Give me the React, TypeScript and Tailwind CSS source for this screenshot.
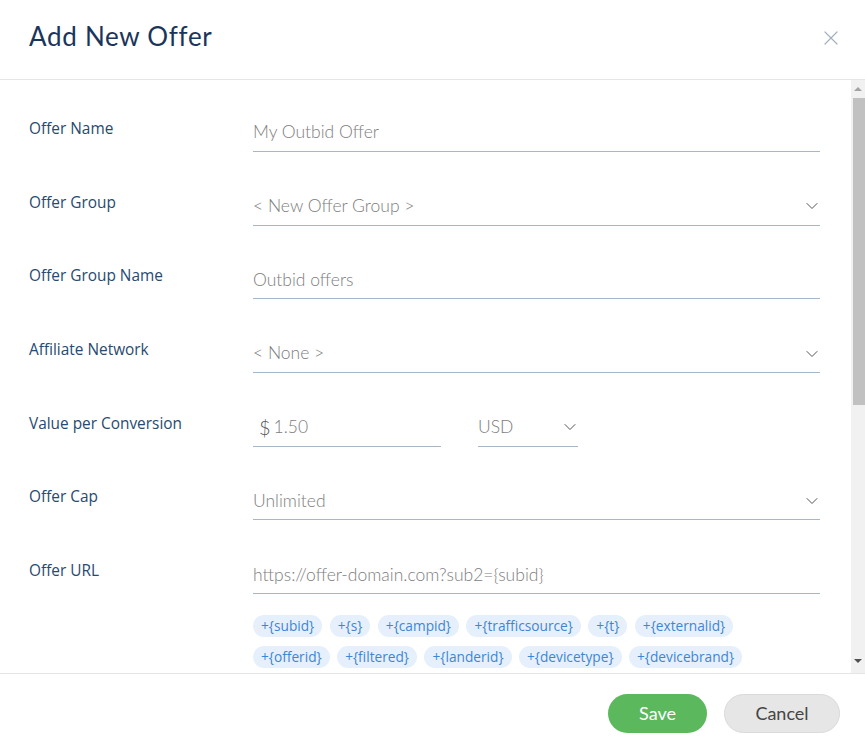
import { X, ChevronDown } from "lucide-react";

const tokens = [
  ["{subid}", "{s}", "{campid}", "{trafficsource}", "{t}", "{externalid}"],
  ["{offerid}", "{filtered}", "{landerid}", "{devicetype}", "{devicebrand}"],
];

function Field({ label, children }: { label: string; children: React.ReactNode }) {
  return (
    <div className="flex items-start">
      <div className="w-[224px] shrink-0 pt-[3px] font-['Open_Sans',sans-serif] text-[15.4px] text-[#284a70]">
        {label}
      </div>
      <div className="flex-1">{children}</div>
    </div>
  );
}

function TextInput({ value, prefix }: { value: string; prefix?: string }) {
  return (
    <div className="flex h-[38px] items-center border-b border-[#a9b6c6] text-[17.5px] font-light text-[#7d7d7d]">
      {prefix && <span className="mr-[3px] ml-[6px] text-[20px] text-[#555]">{prefix}</span>}
      <span>{value}</span>
    </div>
  );
}

function Select({ value, className = "" }: { value: string; className?: string }) {
  return (
    <div
      className={`flex h-[38px] items-center justify-between border-b border-[#a9b6c6] text-[17.5px] font-light text-[#7d7d7d] ${className}`}
    >
      <span>{value}</span>
      <ChevronDown className="mr-[-2px] h-[20px] w-[20px] text-[#555]" strokeWidth={1.2} />
    </div>
  );
}

export default function App() {
  return (
    <div className="flex h-[747px] w-[865px] flex-col bg-white font-['Lato',sans-serif]">
      <header className="flex h-[80px] shrink-0 items-center justify-between border-b border-[#e5e5e5] pl-[29px] pr-[22px]">
        <h1 className="pb-[6px] text-[26px] font-normal tracking-[0.7px] text-[#1b355a]">Add New Offer</h1>
        <button type="button" className="pb-[3px] text-[#a3b0c0]">
          <X className="h-[24px] w-[24px]" strokeWidth={1.2} />
        </button>
      </header>

      <div className="flex min-h-0 flex-1">
        <div className="flex-1 overflow-hidden">
          <div className="flex flex-col gap-[35.7px] pt-[34px] pr-[31px] pl-[29px]">
            <Field label="Offer Name">
              <TextInput value="My Outbid Offer" />
            </Field>
            <Field label="Offer Group">
              <Select value="< New Offer Group >" />
            </Field>
            <Field label="Offer Group Name">
              <TextInput value="Outbid offers" />
            </Field>
            <Field label="Affiliate Network">
              <Select value="< None >" />
            </Field>
            <Field label="Value per Conversion">
              <div className="flex gap-[37px]">
                <div className="w-[188px]">
                  <TextInput prefix="$" value="1.50" />
                </div>
                <Select value="USD" className="w-[100px]" />
              </div>
            </Field>
            <Field label="Offer Cap">
              <Select value="Unlimited" />
            </Field>
            <Field label="Offer URL">
              <TextInput value="https://offer-domain.com?sub2={subid}" />
              <div className="mt-[21px] flex flex-col gap-[9px]">
                {tokens.map((row, i) => (
                  <div key={i} className="flex gap-[7.5px]">
                    {row.map((t) => (
                      <span
                        key={t}
                        className="flex h-[22px] items-center rounded-full bg-[#e5f0fc] px-[8px] font-['Open_Sans',sans-serif] text-[13.7px] text-[#3f86d2]"
                      >
                        +{t}
                      </span>
                    ))}
                  </div>
                ))}
              </div>
            </Field>
          </div>
        </div>

        {/* scrollbar */}
        <div className="flex w-[14px] shrink-0 flex-col items-center bg-[#f1f1f1]">
          <div className="flex h-[18px] items-center justify-center">
            <span className="h-0 w-0 border-x-[4px] border-b-[4px] border-x-transparent border-b-[#a3a3a3]" />
          </div>
          <div className="ml-[2px] h-[307px] w-[12px] bg-[#c1c1c1]" />
          <div className="flex-1" />
          <div className="flex h-[24px] items-center justify-center">
            <span className="h-0 w-0 border-x-[4px] border-t-[4px] border-x-transparent border-t-[#505050]" />
          </div>
        </div>
      </div>

      <footer className="flex h-[74px] shrink-0 items-center justify-end gap-[17px] border-t border-[#e5e5e5] pt-[6px] pr-[25px]">
        <button
          type="button"
          className="h-[39px] w-[99px] rounded-full bg-[#5cb85c] text-[18px] text-white"
        >
          Save
        </button>
        <button
          type="button"
          className="h-[39px] w-[116px] rounded-full border border-[#dadada] bg-[#e6e6e6] text-[18px] text-[#444]"
        >
          Cancel
        </button>
      </footer>
    </div>
  );
}
